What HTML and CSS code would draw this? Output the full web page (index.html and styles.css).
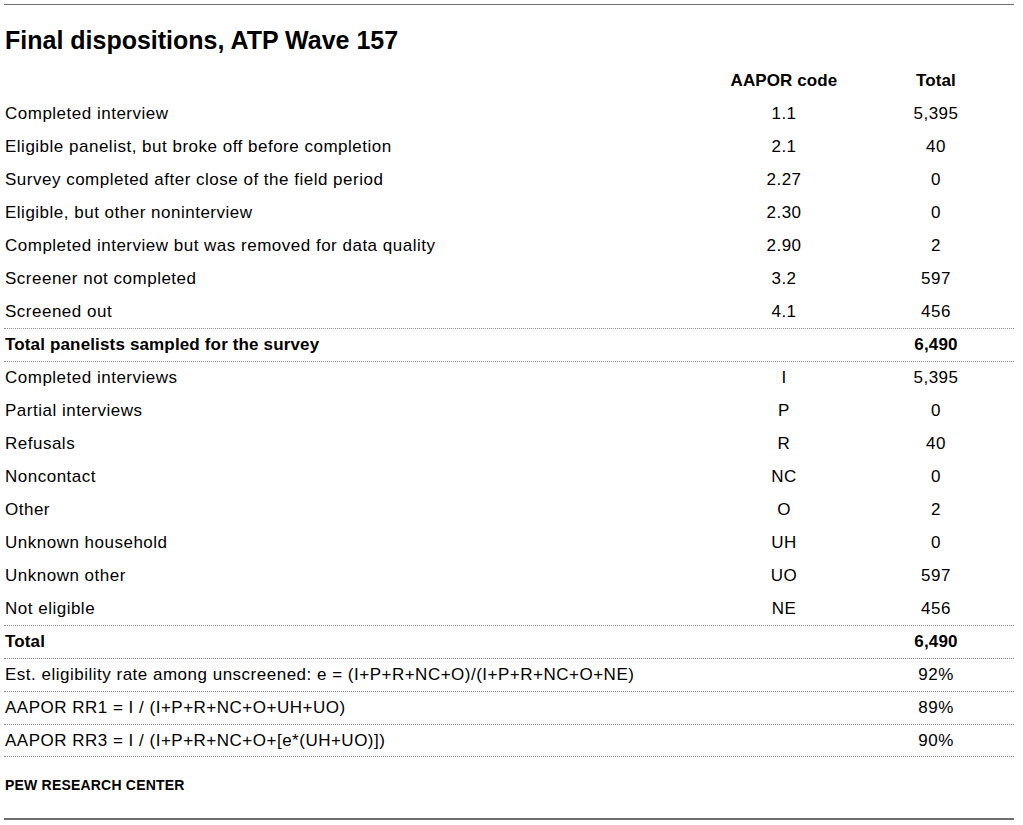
FILE: index.html
```html
<!DOCTYPE html>
<html lang="en">
<head>
<meta charset="utf-8">
<title>Final dispositions, ATP Wave 157</title>
<link rel="stylesheet" href="styles.css">
</head>
<body>
<div class="page">
  <div class="rule-top"></div>
  <h1 class="title">Final dispositions, ATP Wave 157</h1>
  <div class="table">
    <div class="row head"><div class="lab"></div><div class="code">AAPOR code</div><div class="tot">Total</div></div>
    <div class="row"><div class="lab">Completed interview</div><div class="code">1.1</div><div class="tot">5,395</div></div>
    <div class="row"><div class="lab">Eligible panelist, but broke off before completion</div><div class="code">2.1</div><div class="tot">40</div></div>
    <div class="row"><div class="lab">Survey completed after close of the field period</div><div class="code">2.27</div><div class="tot">0</div></div>
    <div class="row"><div class="lab">Eligible, but other noninterview</div><div class="code">2.30</div><div class="tot">0</div></div>
    <div class="row"><div class="lab">Completed interview but was removed for data quality</div><div class="code">2.90</div><div class="tot">2</div></div>
    <div class="row"><div class="lab">Screener not completed</div><div class="code">3.2</div><div class="tot">597</div></div>
    <div class="row"><div class="lab">Screened out</div><div class="code">4.1</div><div class="tot">456</div></div>
    <div class="row sep bold"><div class="lab">Total panelists sampled for the survey</div><div class="code"></div><div class="tot">6,490</div></div>
    <div class="row sep"><div class="lab">Completed interviews</div><div class="code">I</div><div class="tot">5,395</div></div>
    <div class="row"><div class="lab">Partial interviews</div><div class="code">P</div><div class="tot">0</div></div>
    <div class="row"><div class="lab">Refusals</div><div class="code">R</div><div class="tot">40</div></div>
    <div class="row"><div class="lab">Noncontact</div><div class="code">NC</div><div class="tot">0</div></div>
    <div class="row"><div class="lab">Other</div><div class="code">O</div><div class="tot">2</div></div>
    <div class="row"><div class="lab">Unknown household</div><div class="code">UH</div><div class="tot">0</div></div>
    <div class="row"><div class="lab">Unknown other</div><div class="code">UO</div><div class="tot">597</div></div>
    <div class="row"><div class="lab">Not eligible</div><div class="code">NE</div><div class="tot">456</div></div>
    <div class="row sep bold"><div class="lab">Total</div><div class="code"></div><div class="tot">6,490</div></div>
    <div class="row sep"><div class="lab">Est. eligibility rate among unscreened: e = (I+P+R+NC+O)/(I+P+R+NC+O+NE)</div><div class="code"></div><div class="tot">92%</div></div>
    <div class="row sep"><div class="lab">AAPOR RR1 = I / (I+P+R+NC+O+UH+UO)</div><div class="code"></div><div class="tot">89%</div></div>
    <div class="row sep last"><div class="lab">AAPOR RR3 = I / (I+P+R+NC+O+[e*(UH+UO)])</div><div class="code"></div><div class="tot">90%</div></div>
  </div>
  <div class="source">PEW RESEARCH CENTER</div>
  <div class="rule-bottom"></div>
</div>
</body>
</html>
```

FILE: styles.css
```css
html, body {
  margin: 0;
  padding: 0;
  background: #ffffff;
}

body {
  font-family: "Liberation Sans", Arial, sans-serif;
  color: #000000;
}

.page {
  width: 1010px;
  margin-left: 4px;
  padding-top: 4px;
}

.rule-top {
  height: 1px;
  background: #6e6e6e;
}

.title {
  margin: 20px 0 0 1px;
  font-size: 25px;
  line-height: 30px;
  font-weight: 700;
  height: 30px;
}

.table {
  margin-top: 10px;
}

.row {
  display: grid;
  grid-template-columns: 1fr 148px 156px;
  align-items: center;
  height: 33px;
  box-sizing: border-box;
  font-size: 17px;
  letter-spacing: 0.5px;
}

.row.head {
  height: 32px;
  font-weight: 700;
  letter-spacing: 0.1px;
}

.row.sep {
  border-top: 1px dotted #8c8c8c;
}

.row.last {
  border-bottom: 1px dotted #8c8c8c;
}

.row.bold {
  font-weight: 700;
  letter-spacing: 0.15px;
}

.lab {
  padding-left: 1px;
  white-space: nowrap;
}

.code,
.tot {
  text-align: center;
}

.source {
  margin: 20px 0 0 1px;
  font-size: 14px;
  line-height: 17px;
  font-weight: 700;
  letter-spacing: 0.2px;
}

.rule-bottom {
  margin-top: 24px;
  height: 2px;
  background: #6e6e6e;
}
```
